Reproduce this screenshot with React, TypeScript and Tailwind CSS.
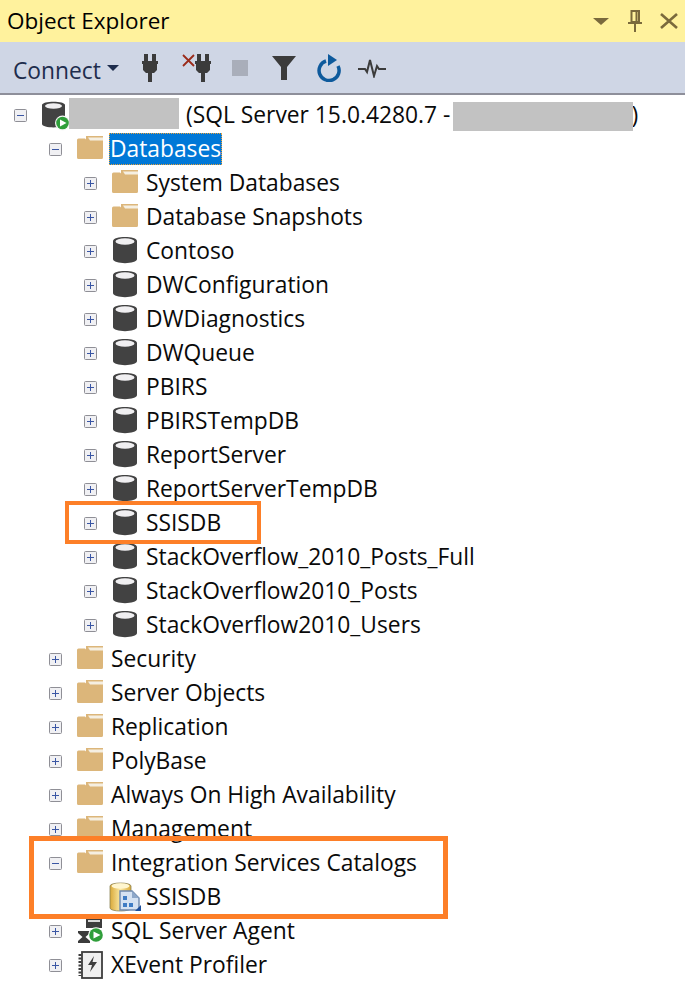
import type { ReactNode } from "react";

function Expander({ open }: { open?: boolean }) {
  return (
    <svg width="13" height="13" viewBox="0 0 13 13" className="shrink-0">
      <rect x="0.5" y="0.5" width="12" height="12" rx="1" fill="#f0f0f3" stroke="#8f8f96" />
      <path d={open ? "M3 6.5h7" : "M3 6.5h7M6.5 3v7"} stroke="#3a56a4" strokeWidth="1" />
    </svg>
  );
}

function Folder() {
  return (
    <svg width="26" height="28" viewBox="0 0 26 28" className="shrink-0">
      <path d="M9 1 H26 V8 H9 Z" fill="#dcb67a" />
      <path d="M11 2.500 H26 V5.500 H13 Z" fill="#f5efe2" />
      <path d="M0 5 Q0 3.500 1.500 3.500 H8 L10.500 6 H26 V22.500 Q26 24 24.500 24 H1.500 Q0 24 0 22.500 Z" fill="#dcb67a" />
    </svg>
  );
}

function Db() {
  return (
    <svg width="24" height="30" viewBox="0 1 24 30" className="ml-px shrink-0">
      <path d="M0 6 C0 0.500 24 0.500 24 6 V24 C24 29.500 0 29.500 0 24 Z" fill="#424242" />
      <ellipse cx="12" cy="6.500" rx="9.500" ry="3.200" fill="#f0eff1" />
    </svg>
  );
}

function ServerIcon() {
  return (
    <svg width="29" height="32" viewBox="1 0 29 32" className="shrink-0">
      <path d="M1 6 C1 1.500 24 1.500 24 6 V25 C24 29.500 1 29.500 1 25 Z" fill="#424242" />
      <ellipse cx="12.500" cy="7" rx="8.500" ry="2.800" fill="#f0eff1" />
      <circle cx="21.500" cy="24" r="7.500" fill="#f6f6f6" />
      <circle cx="21.500" cy="24" r="6.300" fill="#2f9e3a" />
      <path d="M19 20.500 L25.500 24 L19 27.500 Z" fill="#fff" />
    </svg>
  );
}

function CatalogIcon() {
  return (
    <svg width="33" height="32" viewBox="0 0 33 32" className="shrink-0">
      <defs>
        <linearGradient id="catalog" x1="0" x2="1" y1="0" y2="0">
          <stop offset="0" stopColor="#d9a93a" />
          <stop offset="0.5" stopColor="#fbe9a4" />
          <stop offset="1" stopColor="#d9a93a" />
        </linearGradient>
      </defs>
      <path d="M1 5 C1 1 22 1 22 5 V27 C22 31 1 31 1 27 Z" fill="url(#catalog)" stroke="#8c8355" strokeWidth="0.8" />
      <ellipse cx="11.500" cy="5" rx="9" ry="2.800" fill="#fff6cf" />
      <path d="M11 10 H23 L30 17 V29 H11 Z" fill="#d5e2f2" stroke="#6d88ad" strokeWidth="1.400" />
      <path d="M23 10 V17 H30 Z" fill="#8ea8c9" />
      <path d="M26 30 H32 V24 Z" fill="#1c4f9c" />
      <rect x="14" y="15" width="4" height="4" fill="#3f7cc4" />
      <rect x="14" y="22" width="4" height="4" fill="#3f7cc4" />
      <rect x="20" y="22" width="4" height="4" fill="#3f7cc4" />
    </svg>
  );
}

function AgentIcon() {
  return (
    <svg width="29" height="34" viewBox="0 0 29 34" className="shrink-0">
      <rect x="9" y="2" width="16" height="12" fill="#3c3c3c" />
      <rect x="11" y="6" width="12" height="2" fill="#d8d8d8" />
      <path d="M1 17 H13 V19 L8.500 23 L13 27 V29 H1 V27 L5.500 23 L1 19 Z" fill="#3c3c3c" />
      <circle cx="19" cy="21" r="7.800" fill="#fff" />
      <circle cx="19" cy="21" r="6.800" fill="#2f9e3a" />
      <path d="M16.500 17.500 L23.500 21 L16.500 24.500 Z" fill="#fff" />
    </svg>
  );
}

function ProfilerIcon() {
  return (
    <svg width="28" height="30" viewBox="0 0 28 30" className="shrink-0">
      <rect x="5" y="2" width="20" height="26" fill="#f0f0f0" stroke="#3d3d3d" strokeWidth="1.800" />
      <path d="M3 4v22" stroke="#3d3d3d" strokeWidth="3" strokeDasharray="2 1.500" />
      <path d="M17 6 L11 15 H15 L13 22 L20 12 H15.500 Z" fill="#3d3d3d" />
    </svg>
  );
}

function Plug() {
  return (
    <svg width="16" height="28" viewBox="0 0 16 28" className="shrink-0">
      <path d="M2 0h4v7h4V0h4v7h2v3h-1v6l-3 3h-2v9H6v-9H4l-3-3v-6H0V7h2z" fill="#3b3b3b" />
    </svg>
  );
}

function Row({ depth, open, icon, children }: { depth: number; open?: boolean; icon: ReactNode; children: ReactNode }) {
  const pad = depth === 0 ? "pl-[14px]" : depth === 1 ? "pl-[49px]" : "pl-[84px]";
  return (
    <div className={`flex h-[34px] items-center whitespace-nowrap ${pad}`}>
      <span className="flex w-[13px] shrink-0">{open === undefined ? null : <Expander open={open} />}</span>
      <span className="ml-[15px] flex w-[29px] shrink-0 items-center">{icon}</span>
      <span className="ml-[5px] flex items-center">{children}</span>
    </div>
  );
}

const dbs = ["Contoso", "DWConfiguration", "DWDiagnostics", "DWQueue", "PBIRS", "PBIRSTempDB", "ReportServer", "ReportServerTempDB", "SSISDB", "StackOverflow_2010_Posts_Full", "StackOverflow2010_Posts", "StackOverflow2010_Users"];
const topFolders = ["Security", "Server Objects", "Replication", "PolyBase", "Always On High Availability", "Management"];

export default function App() {
  return (
    <div className="relative h-[1004px] w-[685px] overflow-hidden bg-white text-[22.8px] text-[#0a0a0a] [font-family:'Open_Sans','Noto_Sans',sans-serif]">
      <div className="flex h-[42px] items-center bg-[#fff29d] pl-[7px] pr-[7px]">
        <span className="flex-1 text-[22.5px] text-black">Object Explorer</span>
        <svg width="16" height="7" viewBox="0 0 16 7" className="mr-[19px]"><path d="M0 0H16L8 7Z" fill="#7a6a3c" /></svg>
        <svg width="14" height="22" viewBox="0 0 14 22" className="mr-[18px]">
          <path d="M3.500 1H11V12H3.500Z M8.500 1V12" fill="none" stroke="#7a6a3c" strokeWidth="2" />
          <path d="M0 13H14M7 13V22" stroke="#7a6a3c" strokeWidth="2" />
        </svg>
        <svg width="18" height="16" viewBox="0 0 18 16"><path d="M1 1 L17 15M17 1 L1 15" stroke="#7a6a3c" strokeWidth="2.600" /></svg>
      </div>
      <div className="flex h-[53px] items-center border-b-2 border-[#8e8f9a] bg-[#cfd6e5] pl-[13px]">
        <span className="mt-[7px] text-[#1e2d4d]">Connect</span>
        <svg width="12" height="6" viewBox="0 0 12 6" className="ml-[6px]"><path d="M0 0H12L6 6Z" fill="#1e2d4d" /></svg>
        <span className="ml-[23px] flex"><Plug /></span>
        <svg width="13" height="14" viewBox="0 0 13 14" className="ml-[24px] mb-[14px]"><path d="M1 1 L12 12 M12 1 L1 12" stroke="#9b2b1a" strokeWidth="1.800" /></svg>
        <span className="flex"><Plug /></span>
        <span className="ml-[21px] h-[16px] w-[16px] bg-[#a9aeba]" />
        <svg width="24" height="24" viewBox="0 0 24 24" className="ml-[24px]"><path d="M0 0H24L15 11V24H9V11Z" fill="#3b3b3b" /></svg>
        <svg width="25" height="28" viewBox="0 0 25 28" className="ml-[20px]">
          <path d="M10 7 A10 10 0 1 0 22 12" fill="none" stroke="#0e5a9c" strokeWidth="3.500" />
          <path d="M12 0 L21 6 L12 12 Z" fill="#0e5a9c" />
        </svg>
        <svg width="28" height="20" viewBox="0 0 28 20" className="ml-[17px]">
          <path d="M0 11H7L9 14L12 2L16 18L19 8L21 11H28" fill="none" stroke="#3b3b3b" strokeWidth="2" />
        </svg>
      </div>
      <div className="pt-[3px]">
        <Row depth={0} open icon={<ServerIcon />}>
          <span className="ml-[-7px] mr-[7px] mt-[-4px] h-[31px] w-[110px] bg-[#c2c2c2]" />
          <span>(SQL Server 15.0.4280.7 -</span>
          <span className="relative ml-[3px] w-[185px]">
            <span className="absolute right-0 top-1/2 -translate-y-1/2">)</span>
            <span className="relative mt-[3px] block h-[29px] w-[180px] bg-[#c2c2c2]" />
          </span>
        </Row>
        <Row depth={1} open icon={<Folder />}>
          <span className="ml-[-2px] border border-dotted border-[#e8a23c] bg-[#0078d7] leading-[30px] text-white">Databases</span>
        </Row>
        <Row depth={2} open={false} icon={<Folder />}>System Databases</Row>
        <Row depth={2} open={false} icon={<Folder />}>Database Snapshots</Row>
        {dbs.map((name) => (
          <Row key={name} depth={2} open={false} icon={<Db />}>{name}</Row>
        ))}
        {topFolders.map((name) => (
          <Row key={name} depth={1} open={false} icon={<Folder />}>{name}</Row>
        ))}
        <Row depth={1} open icon={<Folder />}>Integration Services Catalogs</Row>
        <Row depth={2} icon={<span className="ml-[-3px] flex"><CatalogIcon /></span>}>SSISDB</Row>
        <Row depth={1} open={false} icon={<AgentIcon />}>SQL Server Agent</Row>
        <Row depth={1} open={false} icon={<ProfilerIcon />}>XEvent Profiler</Row>
      </div>
      {/* orange callouts drawn over the tree */}
      <div className="absolute left-[65px] top-[501px] h-[43px] w-[196px] border-[4px] border-[#fd7f28]" />
      <div className="absolute left-[29px] top-[836px] h-[83px] w-[419px] border-[5px] border-[#fd7f28]" />
    </div>
  );
}
